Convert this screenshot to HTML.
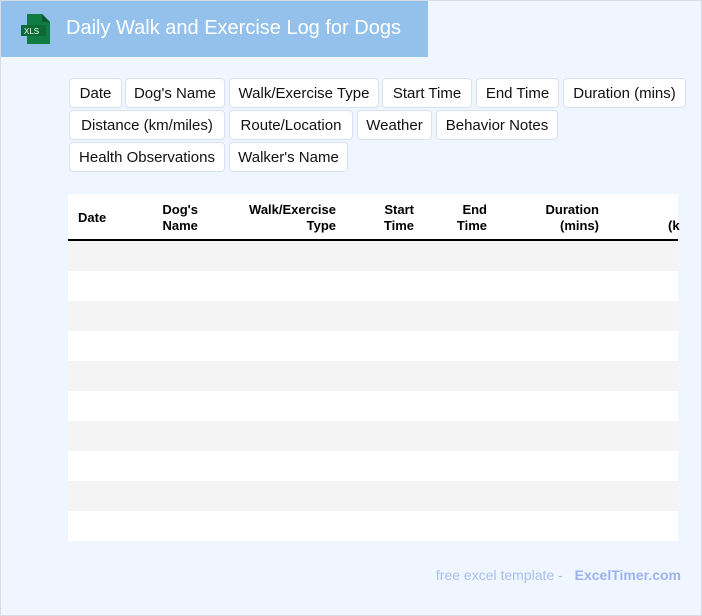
<!DOCTYPE html>
<html><head><style>
*{margin:0;padding:0;box-sizing:border-box}
body{width:702px;height:616px;background:#f0f6ff;font-family:"Liberation Sans",Arial,sans-serif;position:relative;overflow:hidden}
.frame{position:absolute;left:0;top:0;width:702px;height:616px;border:1px solid #d5dde8;pointer-events:none}
.hdr{position:absolute;left:0;top:0;width:428px;height:57px;background:#93c1ec}
.hdr .t{position:absolute;left:66px;top:17px;color:#fff;font-size:20px}
.tag{position:absolute;height:30px;background:#fff;border:1px solid #d8e2ee;border-radius:4px;font-size:15px;color:#111;line-height:29px;text-align:center}
.tbl{position:absolute;left:68px;top:194px;width:610px;height:347px;background:#fff}
.th{position:absolute;top:0;height:47px;border-bottom:2px solid #000;width:610px}
.h{position:absolute;font-weight:bold;font-size:13px;line-height:16px;color:#000}
.row{position:absolute;left:0;width:610px;height:30px}
.g{background:#f4f4f4}
.ft{position:absolute;right:21px;top:567px;font-size:14px;color:#a9bff0}
.ft b{margin-left:8px;color:#9cb3ee}
</style></head><body>
<div class="hdr">
<svg style="position:absolute;left:21px;top:14px" width="30" height="30" viewBox="0 0 30 30">
<path d="M6 0H21L29 8V30H6Z" fill="#107c41"/><path d="M21 0V8H29Z" fill="#0b5a2f"/>
<rect x="0" y="11" width="25" height="11" fill="#0d6a37"/>
<text x="3" y="20" font-size="8" fill="#fff" font-family="Liberation Sans">XLS</text></svg>
<div class="t">Daily Walk and Exercise Log for Dogs</div></div>
<div class="tag" style="left:69px;top:78px;width:53px">Date</div>
<div class="tag" style="left:125px;top:78px;width:100px">Dog's Name</div>
<div class="tag" style="left:229px;top:78px;width:150px">Walk/Exercise Type</div>
<div class="tag" style="left:382px;top:78px;width:90px">Start Time</div>
<div class="tag" style="left:476px;top:78px;width:83px">End Time</div>
<div class="tag" style="left:563px;top:78px;width:123px">Duration (mins)</div>
<div class="tag" style="left:69px;top:110px;width:156px">Distance (km/miles)</div>
<div class="tag" style="left:229px;top:110px;width:124px">Route/Location</div>
<div class="tag" style="left:357px;top:110px;width:75px">Weather</div>
<div class="tag" style="left:436px;top:110px;width:122px">Behavior Notes</div>
<div class="tag" style="left:69px;top:142px;width:156px">Health Observations</div>
<div class="tag" style="left:229px;top:142px;width:119px">Walker's Name</div>
<div class="tbl">
<div class="th">
<div class="h" style="left:10px;top:16px">Date</div>
<div class="h" style="right:480px;top:8px;text-align:center">Dog's<br>Name</div>
<div class="h" style="right:342px;top:8px;text-align:right">Walk/Exercise<br>Type</div>
<div class="h" style="right:264px;top:8px;text-align:right">Start<br>Time</div>
<div class="h" style="right:191px;top:8px;text-align:right">End<br>Time</div>
<div class="h" style="right:79px;top:8px;text-align:right">Duration<br>(mins)</div>
<div class="h" style="left:600px;top:24px">(k</div>
</div>
<div class="row g" style="top:47px"></div>
<div class="row g" style="top:107px"></div>
<div class="row g" style="top:167px"></div>
<div class="row g" style="top:227px"></div>
<div class="row g" style="top:287px"></div>
</div>
<div class="ft">free excel template - <b>ExcelTimer.com</b></div>
<div class="frame"></div>
</body></html>
